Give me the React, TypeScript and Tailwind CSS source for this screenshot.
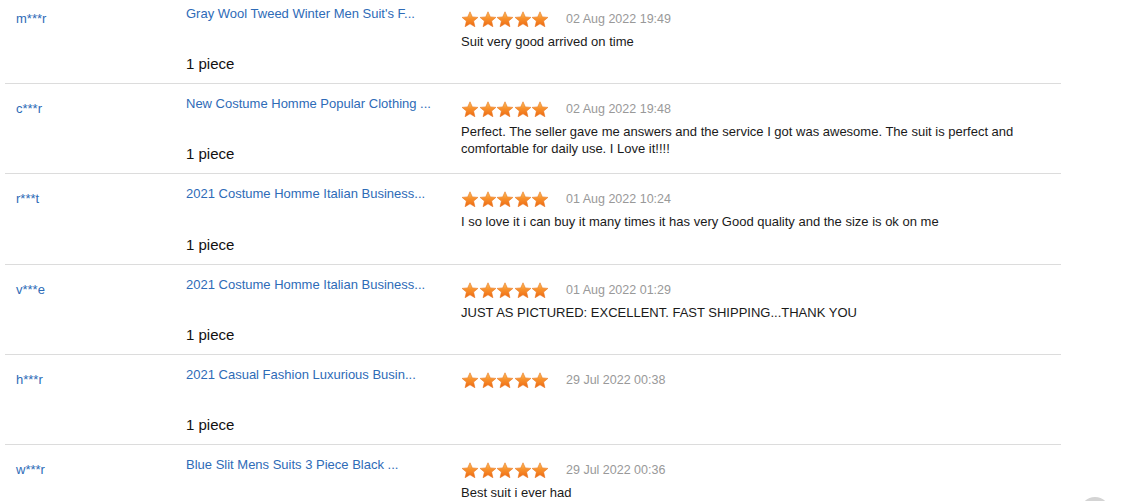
const reviews = [
  {
    name: 'm***r',
    title: "Gray Wool Tweed Winter Men Suit's F...",
    date: '02 Aug 2022 19:49',
    text: 'Suit very good arrived on time',
  },
  {
    name: 'c***r',
    title: 'New Costume Homme Popular Clothing ...',
    date: '02 Aug 2022 19:48',
    text: 'Perfect. The seller gave me answers and the service I got was awesome. The suit is perfect and comfortable for daily use. I Love it!!!!',
  },
  {
    name: 'r***t',
    title: '2021 Costume Homme Italian Business...',
    date: '01 Aug 2022 10:24',
    text: 'I so love it i can buy it many times it has very Good quality and the size is ok on me',
  },
  {
    name: 'v***e',
    title: '2021 Costume Homme Italian Business...',
    date: '01 Aug 2022 01:29',
    text: 'JUST AS PICTURED: EXCELLENT. FAST SHIPPING...THANK YOU',
  },
  {
    name: 'h***r',
    title: '2021 Casual Fashion Luxurious Busin...',
    date: '29 Jul 2022 00:38',
    text: '',
  },
  {
    name: 'w***r',
    title: 'Blue Slit Mens Suits 3 Piece Black ...',
    date: '29 Jul 2022 00:36',
    text: 'Best suit i ever had',
  },
];

function Star({ id }: { id: string }) {
  return (
    <svg width="18" height="17" viewBox="0 0 18 17" className="block">
      <defs>
        <linearGradient id={id} x1="0" y1="0" x2="0" y2="1">
          <stop offset="0" stopColor="#fdc060" />
          <stop offset="0.45" stopColor="#f8912c" />
          <stop offset="1" stopColor="#ee6812" />
        </linearGradient>
      </defs>
      <path
        d="M9 0.8 L11.3 5.9 L16.9 6.4 L12.6 10.1 L13.9 15.7 L9 12.8 L4.1 15.7 L5.4 10.1 L1.1 6.4 L6.7 5.9 Z"
        fill={`url(#${id})`}
        stroke="#e8731c"
        strokeWidth="0.6"
        strokeLinejoin="round"
      />
    </svg>
  );
}

function Stars({ row }: { row: number }) {
  return (
    <div className="flex h-[17px] w-[88px] items-center">
      {[0, 1, 2, 3, 4].map((i) => (
        <div key={i} className="-mr-[0.4px]">
          <Star id={`st-${row}-${i}`} />
        </div>
      ))}
    </div>
  );
}

export default function App() {
  return (
    <div className="relative h-[501px] w-[1128px] overflow-hidden bg-white font-['Liberation_Sans',Arial,sans-serif]">
      <div className="-mt-[6px] ml-[5px] w-[1056px]">
        {reviews.map((r, idx) => (
          <div
            key={idx}
            className={`flex border-b border-[#dcdcdc] ${idx === 2 ? 'h-[91px]' : 'h-[90px]'}`}
          >
            <div className="w-[181px] pl-[11px] pt-[17px] text-[13px] leading-[16px] text-[#2e6bb7]">
              {r.name}
            </div>
            <div className="flex w-[275px] flex-col justify-between pt-[12px] pb-[10px]">
              <div className="text-[13px] leading-[16px] text-[#2e6bb7]">{r.title}</div>
              <div className="text-[15px] leading-[18px] text-[#111]">1 piece</div>
            </div>
            <div className="flex-1 pt-[17px]">
              <div className="flex items-center">
                <Stars row={idx} />
                <span className="ml-[17px] text-[12.5px] leading-[17px] text-[#999]">{r.date}</span>
              </div>
              <div className="mt-[5px] w-[590px] text-[13px] leading-[17px] text-[#1a1a1a]">{r.text}</div>
            </div>
          </div>
        ))}
      </div>
      <div className="absolute left-[1080px] top-[497px] h-[30px] w-[30px] rounded-full bg-[#d4d4d4]" />
    </div>
  );
}
